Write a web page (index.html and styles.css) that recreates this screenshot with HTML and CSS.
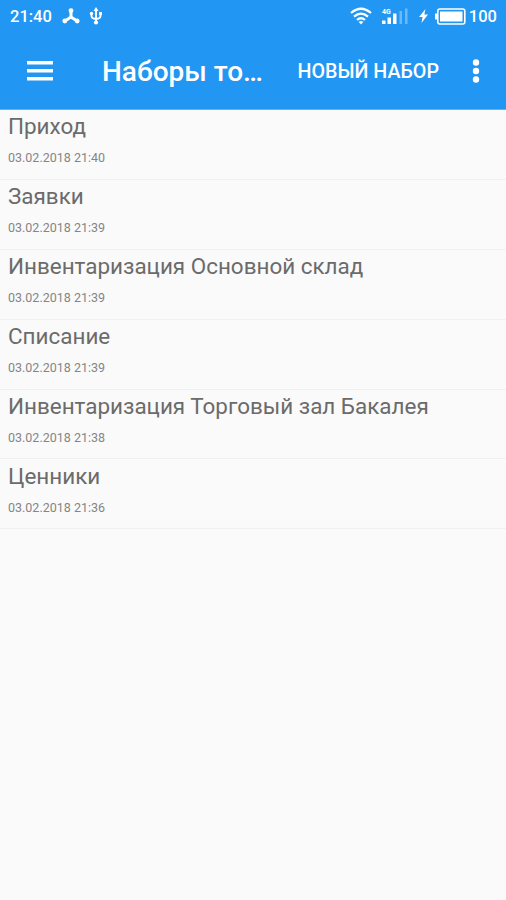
FILE: index.html
```html
<!DOCTYPE html>
<html lang="ru">
<head>
  <meta charset="UTF-8">
  <meta name="viewport" content="width=device-width, initial-scale=1.0">
  <title>Наборы товаров</title>
  <link rel="stylesheet" href="styles.css">
</head>
<body>
  <header class="header">
    <div class="status-bar">
      <span class="clock">21:40</span>
      <svg class="icon-share" width="18" height="16" viewBox="0 0 18 16">
        <path d="M9 3v6l-6 4M9 9l6 4" fill="none" stroke="#fff" stroke-width="3"/>
        <circle cx="9" cy="2.6" r="2.4"/>
        <circle cx="2.8" cy="13" r="2.4"/>
        <circle cx="15.2" cy="13" r="2.4"/>
      </svg>
      <svg class="icon-usb" width="14" height="18" viewBox="0 0 14 18">
        <path d="M7 3v12M2.500 6.500V9q0 2.600 4.500 3Q11.500 11.600 11.500 9V6.500" fill="none" stroke="#fff" stroke-width="1.900"/>
        <path d="M7 0l2.500 4h-5z"/>
        <circle cx="2.500" cy="6.500" r="1.700"/>
        <path d="M10 5h3v3h-3z"/>
        <circle cx="7" cy="15.500" r="2.100"/>
      </svg>
      <svg class="icon-wifi" width="22" height="18" viewBox="0 0 22 18">
        <g fill="none" stroke="#fff" stroke-width="2.200">
          <path d="M1 6Q11-2.500 21 6"/>
          <path d="M4 9.700Q11 3.600 18 9.700"/>
          <path d="M7 13Q11 9.500 15 13"/>
        </g>
        <path d="M8.700 15q2.300-1.800 4.600 0L11 17.600z"/>
      </svg>
      <svg class="icon-signal" width="27" height="17" viewBox="0 0 27 17">
        <path d="M1 12.500h3.500V16H1zM6.500 9.500H10V16H6.500zM12 5.500h3.500V16H12z"/>
        <path d="M18.500 3H21v13h-2.500zM24 .500h2.500V16H24z" opacity=".35"/>
        <text class="network" x="1" y="6">4G</text>
      </svg>
      <svg class="icon-bolt" width="9" height="14" viewBox="0 0 9 14">
        <path d="M6.500 0L0 8h3.500l-1 6L9 5.600H5.300z"/>
      </svg>
      <svg class="icon-battery" width="31" height="17" viewBox="0 0 31 17">
        <rect x="2.800" y="1" width="27" height="15" rx="2" fill="none" stroke="#fff" stroke-width="1.600"/>
        <path d="M0 5.500h2.500v6H0zM5 3.500h22.500v10H5z"/>
      </svg>
      <span class="percent">100</span>
    </div>
    <div class="toolbar">
      <svg class="icon-menu" width="26" height="20" viewBox="0 0 26 20">
        <path d="M0 0h26v3.400H0zM0 8h26v3.400H0zM0 16h26v3.400H0z"/>
      </svg>
      <h1 class="toolbar-title">Наборы то…</h1>
      <span class="toolbar-action">НОВЫЙ НАБОР</span>
      <svg class="icon-more" width="8" height="24" viewBox="0 0 8 24">
        <circle cx="4" cy="3.500" r="3.200"/>
        <circle cx="4" cy="12" r="3.200"/>
        <circle cx="4" cy="20.500" r="3.200"/>
      </svg>
    </div>
  </header>

  <ul class="list">
    <li class="item">
      <div class="item-name">Приход</div>
      <div class="item-date">03.02.2018 21:40</div>
    </li>
    <li class="item">
      <div class="item-name">Заявки</div>
      <div class="item-date">03.02.2018 21:39</div>
    </li>
    <li class="item">
      <div class="item-name">Инвентаризация Основной склад</div>
      <div class="item-date">03.02.2018 21:39</div>
    </li>
    <li class="item">
      <div class="item-name">Списание</div>
      <div class="item-date">03.02.2018 21:39</div>
    </li>
    <li class="item">
      <div class="item-name">Инвентаризация Торговый зал Бакалея</div>
      <div class="item-date">03.02.2018 21:38</div>
    </li>
    <li class="item">
      <div class="item-name">Ценники</div>
      <div class="item-date">03.02.2018 21:36</div>
    </li>
  </ul>
</body>
</html>
```
FILE: styles.css
```css
* {
  box-sizing: border-box;
}

body {
  margin: 0;
  min-height: 900px;
  background-color: #fafafa;
  font-family: Roboto, "Noto Sans", sans-serif;
}

svg {
  display: block;
  flex: none;
  fill: #fff;
}

.header {
  height: 110px;
  background-color: #2196f3;
  border-bottom: 1px solid #5fb3f3;
  color: #fff;
}

.status-bar {
  display: flex;
  align-items: center;
  height: 32px;
  padding: 0 9px 0 10px;
  font-size: 16.5px;
  font-weight: 500;
}

.clock {
  width: 52px;
}

.icon-usb {
  margin-left: 9px;
}

.icon-wifi {
  margin-left: auto;
}

.icon-signal {
  margin-left: 9px;
}

.network {
  font-size: 7px;
  font-weight: 700;
}

.icon-bolt {
  margin-left: 11px;
}

.icon-battery {
  margin-left: 7px;
}

.percent {
  margin-left: 3px;
}

.toolbar {
  display: flex;
  align-items: center;
  height: 77px;
  padding: 0 26px 0 27px;
}

.toolbar-title {
  margin: 2px 0 0 49px;
  white-space: nowrap;
  font-size: 28px;
  line-height: 34px;
  font-weight: 500;
}

.toolbar-action {
  margin-top: 2px;
  margin-left: auto;
  margin-right: 33px;
  font-size: 19.7px;
  font-weight: 500;
  white-space: nowrap;
}

.list {
  margin: 0;
  padding: 0;
  list-style: none;
}

.item {
  height: 69.9px;
  padding: 2.4px 8px 0;
  border-bottom: 1px solid #f0f0f0;
}

.item-name {
  font-size: 22.45px;
  line-height: 28px;
  color: #6b6b6b;
}

.item-date {
  margin-top: 10.1px;
  font-size: 12.5px;
  line-height: 16px;
  color: #858585;
}
```
